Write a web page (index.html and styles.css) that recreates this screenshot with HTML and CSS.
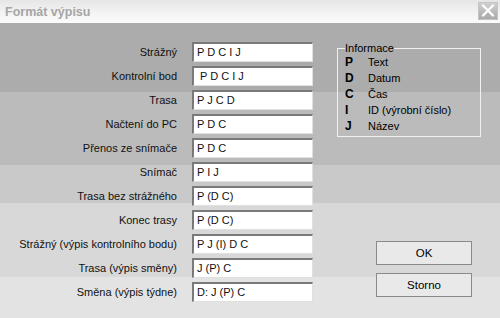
FILE: index.html
```html
<!DOCTYPE html>
<html>
<head>
<meta charset="utf-8">
<link rel="stylesheet" href="styles.css">
</head>
<body>
<div class="dialog">
  <div class="titlebar">
    <span class="title">Formát výpisu</span>
    <span class="close"><svg width="18" height="17" viewBox="0 0 18 17"><path d="M4 3.5 L14 13.5 M14 3.5 L4 13.5" stroke="#fff" stroke-width="2.4" stroke-linecap="round"/></svg></span>
  </div>
  <div class="content">
    <div class="form">
      <label class="lbl">Strážný</label><div class="inp">P D C I J</div>
      <label class="lbl">Kontrolní bod</label><div class="inp">&nbsp;P D C I J</div>
      <label class="lbl">Trasa</label><div class="inp">P J C D</div>
      <label class="lbl">Načtení do PC</label><div class="inp">P D C</div>
      <label class="lbl">Přenos ze snímače</label><div class="inp">P D C</div>
      <label class="lbl">Snímač</label><div class="inp">P I J</div>
      <label class="lbl">Trasa bez strážného</label><div class="inp">P (D C)</div>
      <label class="lbl">Konec trasy</label><div class="inp">P (D C)</div>
      <label class="lbl">Strážný (výpis kontrolního bodu)</label><div class="inp">P J (I) D C</div>
      <label class="lbl">Trasa (výpis směny)</label><div class="inp">J (P) C</div>
      <label class="lbl">Směna (výpis týdne)</label><div class="inp">D: J (P) C</div>
    </div>
    <div class="side">
      <fieldset class="info">
        <legend>Informace</legend>
        <div class="irow"><b>P</b><span>Text</span></div>
        <div class="irow"><b>D</b><span>Datum</span></div>
        <div class="irow"><b>C</b><span>Čas</span></div>
        <div class="irow"><b>I</b><span>ID (výrobní číslo)</span></div>
        <div class="irow"><b>J</b><span>Název</span></div>
      </fieldset>
      <div class="buttons">
        <button class="btn">OK</button>
        <button class="btn">Storno</button>
      </div>
    </div>
  </div>
</div>
</body>
</html>
```
FILE: styles.css
```css
html, body {
  margin: 0;
  padding: 0;
}
body {
  width: 500px;
  height: 318px;
  overflow: hidden;
  font-family: "Liberation Sans", Arial, sans-serif;
  font-size: 11px;
  color: #000;
}
.dialog {
  width: 500px;
  height: 318px;
  display: flex;
  flex-direction: column;
}
.titlebar {
  height: 23px;
  flex: none;
  display: flex;
  align-items: center;
  justify-content: space-between;
  background: linear-gradient(to bottom, #e6e6e6 0%, #f2f2f2 50%, #fbfbfb 100%);
  padding: 0 2px 0 5px;
}
.title {
  font-family: "Liberation Sans", Arial, sans-serif;
  font-weight: bold;
  font-size: 12.5px;
  color: #a6a6a6;
}
.close {
  width: 20px;
  height: 18px;
  display: flex;
  align-items: center;
  justify-content: center;
  background: linear-gradient(#d0d0d0, #a9a9a9);
  border: 1px solid #c4c4c4;
  box-sizing: border-box;
  margin-top: -2px;
}
.content {
  flex: 1;
  display: flex;
  background: linear-gradient(to bottom,
    #acacac 0, #acacac 69px,
    #bbbbbb 69px, #bbbbbb 142px,
    #c9c9c9 142px, #c9c9c9 180px,
    #d8d8d8 180px, #d8d8d8 254px,
    #e3e3e3 254px, #e3e3e3 100%);
}
.form {
  width: 337px;
  display: grid;
  grid-template-columns: 177px 121px;
  column-gap: 15px;
  row-gap: 4px;
  grid-auto-rows: 20px;
  padding-top: 19px;
  align-content: start;
}
.lbl {
  text-align: right;
  align-self: center;
  white-space: nowrap;
  font-size: 11px;
  color: #111;
}
.inp {
  background: #fff;
  border-top: 2px solid #7a7a7a;
  border-left: 2px solid #7a7a7a;
  border-right: 1px solid #e0e0e0;
  border-bottom: 1px solid #e0e0e0;
  box-sizing: border-box;
  padding: 1px 0 0 3px;
  font-size: 11px;
  white-space: pre;
  line-height: 15px;
  color: #111;
}
.side {
  flex: 1;
  display: flex;
  flex-direction: column;
}
.info {
  margin: 20px 0 0 0;
  width: 144px;
  height: 94px;
  box-sizing: border-box;
  border: 1px solid #f0f0f0;
  padding: 0 0 0 7px;
}
.info legend {
  padding: 0;
  margin-left: 0;
  font-size: 11px;
  line-height: 11px;
}
.irow {
  display: flex;
  height: 16px;
  align-items: center;
  font-size: 11px;
}
.irow b {
  width: 23px;
  font-size: 12px;
}
.buttons {
  margin-top: auto;
  padding: 0 0 21px 39px;
  display: flex;
  flex-direction: column;
  gap: 8px;
}
.btn {
  width: 96px;
  height: 24px;
  background: #e9e9e9;
  border: 1px solid #8a8a8a;
  font-family: "Liberation Sans", Arial, sans-serif;
  font-size: 11.5px;
  color: #000;
  padding: 0;
}
```
